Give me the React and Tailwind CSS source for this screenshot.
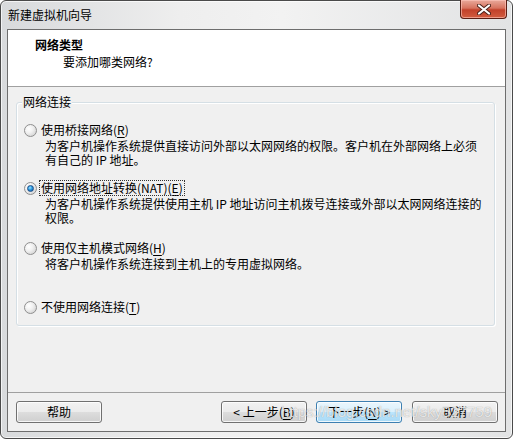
const font = "font-['Noto_Sans_CJK_SC','Noto_Sans',sans-serif]";

const Radio = ({ checked }) => (
  <span className="relative flex h-[13px] w-[13px] shrink-0 items-center justify-center rounded-full border border-[#8f8f8f] bg-[radial-gradient(circle_at_35%_35%,#ffffff_0%,#f0f0f0_40%,#c8c8c8_100%)]">
    {checked && (
      <span className="h-[7px] w-[7px] rounded-full border border-[#1c4f8a] bg-[radial-gradient(circle_at_40%_35%,#9fe3ff_0%,#2d9be0_45%,#0e4f9a_100%)]" />
    )}
  </span>
);

const Key = ({ k }) => <span className="underline underline-offset-2">{k}</span>;

const Option = ({ checked, focus, label, k, desc, className }) => (
  <div className={className}>
    <div className="flex h-[16px] items-center">
      <Radio checked={checked} />
      <span
        className={
          "ml-[3px] leading-[14px] " +
          (focus ? "outline outline-1 outline-dotted outline-[#333] px-[1px]" : "px-[1px]")
        }
      >
        {label}(<Key k={k} />)
      </span>
    </div>
    {desc && <div className="ml-[21px] mt-[1px] leading-[14px]">{desc}</div>}
  </div>
);

const Button = ({ children, primary, className }) => (
  <button
    className={
      "flex h-[22px] w-[86px] items-center justify-center rounded-[3px] border text-[12px] leading-none text-black shadow-[inset_0_0_0_1px_rgba(255,255,255,0.8)] " +
      (primary
        ? "border-[#3c7fb1] bg-[linear-gradient(to_bottom,#eaf6fd_0%,#d9f0fc_50%,#bee6fd_50%,#a7d9f5_100%)] "
        : "border-[#707070] bg-[linear-gradient(to_bottom,#f2f2f2_0%,#ebebeb_50%,#dddddd_50%,#cfcfcf_100%)] ") +
      (className || "")
    }
  >
    {children}
  </button>
);

export default function App() {
  return (
    <div className={"relative h-[439px] w-[513px] bg-white text-[12px] text-black " + font}>
      <div className="flex h-full w-full flex-col rounded-[6px] border border-[#4a4a4a] bg-[linear-gradient(to_right,#d8dadc_0%,#eeeeee_35%,#f2f2f2_55%,#e2e3e4_100%)] px-[6px] pb-[6px] pt-[28px] shadow-[inset_0_0_0_1px_rgba(255,255,255,0.7)]">
        {/* title bar */}
        <div className="absolute left-[8px] top-[7px] leading-[16px] text-[12px]">新建虚拟机向导</div>
        <div className="absolute right-[6px] top-0 flex h-[19px] w-[47px] items-center justify-center rounded-b-[4px] border border-t-0 border-[#5a1e14] bg-[linear-gradient(to_bottom,#e9a99b_0%,#d7735f_45%,#c2412a_55%,#d25c3f_100%)] shadow-[inset_0_0_0_1px_rgba(255,200,190,0.6)]">
          <svg width="14" height="11" viewBox="0 0 14 11">
            <path d="M2 1.5 L12 9.5 M12 1.5 L2 9.5" stroke="#4a2018" strokeWidth="4" strokeLinecap="round" />
            <path d="M2 1.5 L12 9.5 M12 1.5 L2 9.5" stroke="#ffffff" strokeWidth="2.2" strokeLinecap="round" />
          </svg>
        </div>

        {/* client area */}
        <div className="flex flex-1 flex-col border border-[#6d6d6d] bg-[#f0f0f0]">
          <div className="h-[57px] border-b border-[#a0a0a0] bg-white pl-[27px] pt-[8px]">
            <div className="font-bold leading-[14px]">网络类型</div>
            <div className="ml-[28px] mt-[3px] leading-[14px]">要添加哪类网络?</div>
          </div>

          <div className="flex flex-1 flex-col">
            <div className="relative ml-[8px] mr-[10px] mt-[15px] h-[224px] rounded-[3px] border border-[#d5dfe5] pl-[7px] pt-[19px] shadow-[1px_1px_0_#ffffff,inset_1px_1px_0_#ffffff]">
              <span className="absolute -top-[8px] left-[5px] bg-[#f0f0f0] px-[1px] leading-[14px]">网络连接</span>
              <Option
                label="使用桥接网络"
                k="R"
                desc={
                  <>
                    为客户机操作系统提供直接访问外部以太网网络的权限。客户机在外部网络上必须
                    <br />
                    有自己的 IP 地址。
                  </>
                }
              />
              <Option
                className="mt-[13px]"
                checked
                focus
                label="使用网络地址转换(NAT)"
                k="E"
                desc={
                  <>
                    为客户机操作系统提供使用主机 IP 地址访问主机拨号连接或外部以太网网络连接的
                    <br />
                    权限。
                  </>
                }
              />
              <Option className="mt-[15px]" label="使用仅主机模式网络" k="H" desc="将客户机操作系统连接到主机上的专用虚拟网络。" />
              <Option className="mt-[28px]" label="不使用网络连接" k="T" />
            </div>
            <div className="flex-1" />
            <div className="border-t border-[#a0a0a0] shadow-[inset_0_1px_0_#ffffff]" />
            <div className="flex items-center pb-[8px] pl-[8px] pr-[7px] pt-[8px]">
              <Button>帮助</Button>
              <div className="flex-1" />
              <Button>
                &lt; 上一步(<Key k="B" />)
              </Button>
              <Button primary className="ml-[9px]">
                下一步(<Key k="N" />) &gt;
              </Button>
              <Button className="ml-[10px]">取消</Button>
            </div>
          </div>
        </div>
      </div>

      {/* watermark */}
      <div className="pointer-events-none absolute left-[281px] top-[402px] font-['Liberation_Sans',sans-serif] text-[15px] leading-[20px] text-white/75 [text-shadow:0_0_1px_rgba(90,90,90,0.6)]">
        https://blog.csdn.net/sky527759
      </div>
    </div>
  );
}
